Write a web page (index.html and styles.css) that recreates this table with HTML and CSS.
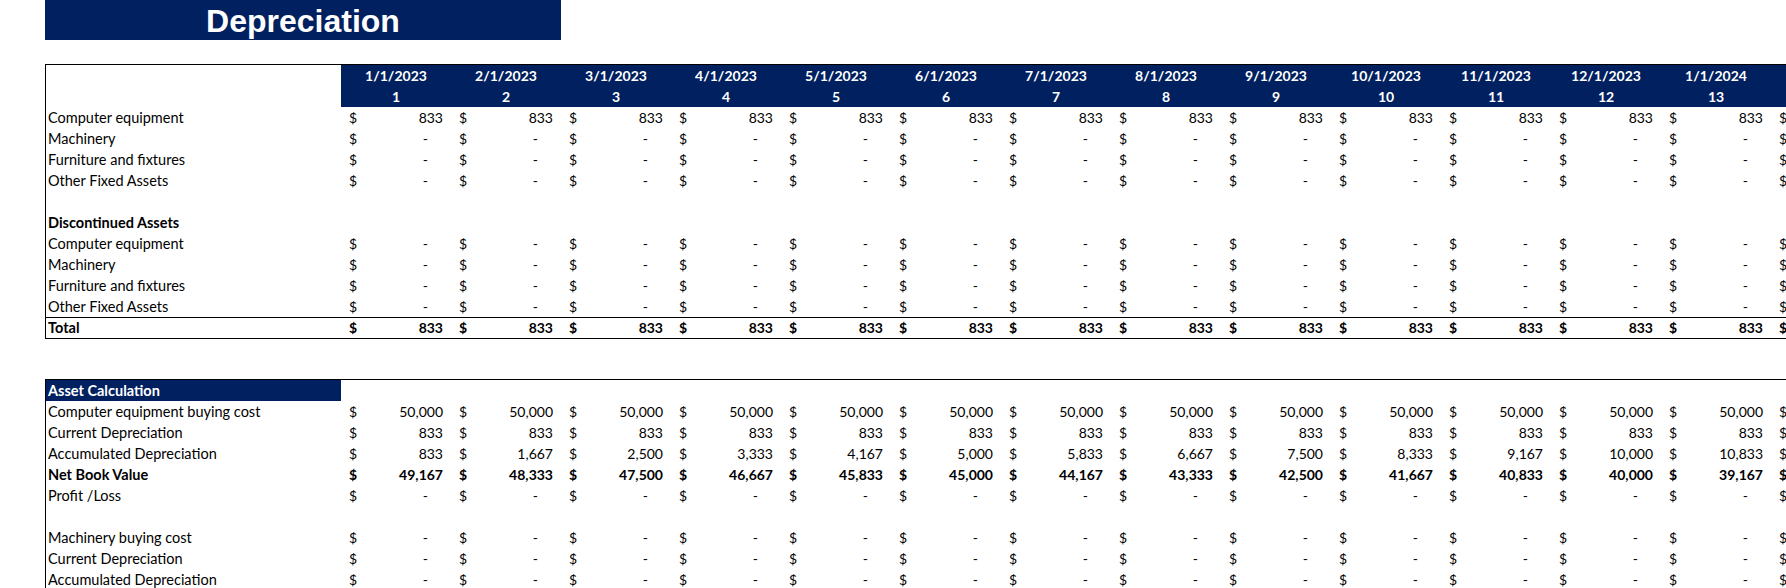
FILE: index.html
```html
<!DOCTYPE html>
<html lang="en">
<head>
    <meta charset="UTF-8">
    <title>Depreciation</title>
    <link rel="stylesheet" href="styles.css">
</head>
<body>
    <div class="sheet">
        <div class="title">Depreciation</div>
        <div class="block block-dep" id="dep-block"></div>
        <div class="block block-assets" id="asset-block"></div>
    </div>
    <script>
    const MONTHS = ['1/1/2023','2/1/2023','3/1/2023','4/1/2023','5/1/2023','6/1/2023','7/1/2023',
        '8/1/2023','9/1/2023','10/1/2023','11/1/2023','12/1/2023','1/1/2024'];
    const COST = 50000;
    const LIFE = 60;

    function fmt(n) {
        return Math.round(n).toLocaleString('en-US');
    }

    function money(v) {
        const num = v ? `<span>${fmt(v)}</span>` : '<span class="zero">-</span>';
        return `<div class="cell"><span>$</span>${num}</div>`;
    }

    // one row: label + month cells, plus the clipped edge column
    function row(label, fn, cls) {
        let html = `<div class="row ${cls || ''}"><div class="lbl">${label}</div>`;
        if (fn) {
            MONTHS.forEach((m, i) => { html += money(fn(i + 1)); });
            html += '<div class="cell edge"><span>$</span></div>';
        }
        return html + '</div>';
    }

    function headRows() {
        let top = '<div class="row head"><div class="lbl"></div>';
        let num = '<div class="row head"><div class="lbl"></div>';
        MONTHS.forEach((m, i) => {
            top += `<div class="hd">${m}</div>`;
            num += `<div class="hd">${i + 1}</div>`;
        });
        top += '<div class="hd edge"></div>';
        num += '<div class="hd edge"></div>';
        return top + '</div>' + num + '</div>';
    }

    const dep = n => COST / LIFE;
    const accum = n => COST / LIFE * n;
    const none = n => 0;

    document.getElementById('dep-block').innerHTML =
        headRows() +
        row('Computer equipment', dep) +
        row('Machinery', none) +
        row('Furniture and fixtures', none) +
        row('Other Fixed Assets', none) +
        row('', null) +
        row('Discontinued Assets', null, 'bold') +
        row('Computer equipment', none) +
        row('Machinery', none) +
        row('Furniture and fixtures', none) +
        row('Other Fixed Assets', none) +
        row('Total', dep, 'bold total');

    document.getElementById('asset-block').innerHTML =
        row('Asset Calculation', null, 'bold section') +
        row('Computer equipment buying cost', n => COST) +
        row('Current Depreciation', dep) +
        row('Accumulated Depreciation', accum) +
        row('Net Book Value', n => COST - accum(n), 'bold') +
        row('Profit /Loss', none) +
        row('', null) +
        row('Machinery buying cost', none) +
        row('Current Depreciation', none) +
        row('Accumulated Depreciation', none);
    </script>
</body>
</html>
```

FILE: styles.css
```css
html, body {
    margin: 0;
    overflow: hidden;
    background: #fff;
}
.sheet {
    padding-left: 45px;
    font-family: Lato, 'Open Sans', sans-serif;
    font-size: 14px;
    color: #000;
    width: 1741px;
}
.title {
    width: 516px;
    height: 40px;
    background: #002060;
    color: #fff;
    font-family: 'Liberation Sans', Arial, sans-serif;
    font-weight: bold;
    font-size: 32px;
    line-height: 42px;
    text-align: center;
    overflow: hidden;
}
.block {
    border-top: 1px solid #000;
    border-left: 1px solid #000;
}
.block-dep {
    margin-top: 24px;
    border-bottom: 1px solid #000;
}
.block-assets {
    margin-top: 40px;
}
.row {
    display: flex;
    height: 21px;
    line-height: 21px;
    white-space: nowrap;
    overflow: hidden;
}
.row.bold { font-weight: bold; }
.row.total {
    border-top: 1px solid #000;
    box-sizing: border-box;
    line-height: 20px;
}
.lbl {
    flex: none;
    width: 295px;
    padding-left: 2px;
    box-sizing: border-box;
    font-size: 14.5px;
}
.section .lbl {
    background: #002060;
    color: #fff;
}
.hd {
    flex: none;
    width: 110px;
    background: #002060;
    color: #fff;
    font-weight: bold;
    text-align: center;
}
.cell {
    flex: none;
    width: 110px;
    padding: 0 8px;
    box-sizing: border-box;
    display: flex;
    justify-content: space-between;
}
.cell .zero { margin-right: 15px; }
.hd.edge, .cell.edge {
    width: 15px;
    padding-right: 0;
}
```
